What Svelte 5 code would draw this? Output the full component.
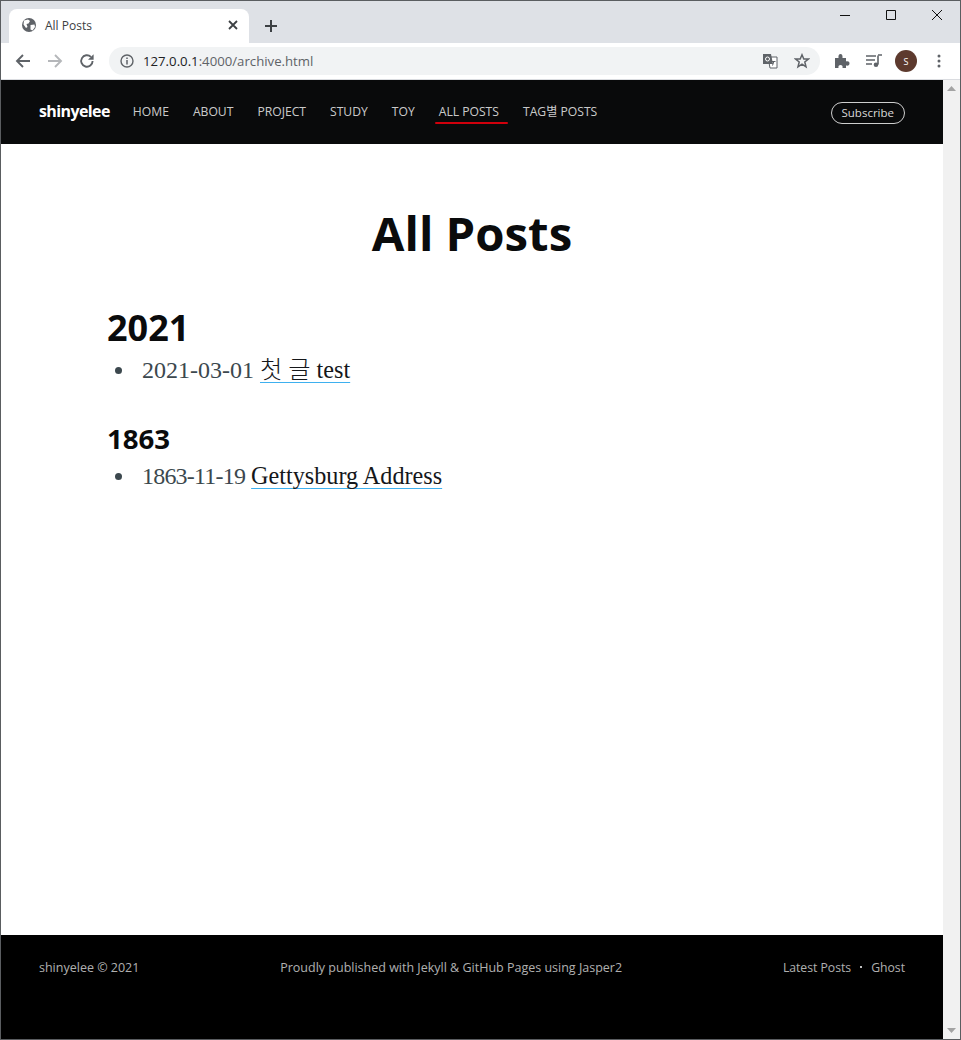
<script>
  const navItems = [
    { label: 'HOME' },
    { label: 'ABOUT' },
    { label: 'PROJECT' },
    { label: 'STUDY' },
    { label: 'TOY' },
    { label: 'ALL POSTS', active: true },
    { label: 'TAG별 POSTS' }
  ];
  const years = [
    { year: '2021', big: true, posts: [{ date: '2021-03-01', title: '첫 글 test' }] },
    { year: '1863', big: false, posts: [{ date: '1863-11-19', title: 'Gettysburg Address', narrow: true }] }
  ];
</script>

<div class="window">
  <div class="tabstrip">
    <div class="tab">
      <svg class="globe" viewBox="0 0 16 16" width="16" height="16"><circle cx="8" cy="8" r="7" fill="#5f6368"/><path d="M3 3.5 7 2.5 9 4 7.5 6.5 5.5 7 6.5 10 5 11 2.5 7.5ZM9.5 8 13.5 7.5 14 10 11.5 13.5 9.5 12.5Z" fill="#fff"/></svg>
      <span class="tabtitle">All Posts</span>
      <svg class="tabclose" viewBox="0 0 10 10" width="10" height="10"><path d="M1 1 9 9M9 1 1 9" stroke="#3c4043" stroke-width="1.8"/></svg>
    </div>
    <svg class="newtab" viewBox="0 0 12 12" width="12" height="12"><path d="M6 0V12M0 6H12" stroke="#3c4043" stroke-width="2"/></svg>
    <div class="winctl">
      <svg viewBox="0 0 10 10" width="10" height="10"><path d="M0 5.5H10" stroke="#111" stroke-width="1"/></svg>
      <svg viewBox="0 0 10 10" width="10" height="10"><path d="M.5.5H9.5V9.5H.5Z" fill="none" stroke="#111" stroke-width="1"/></svg>
      <svg viewBox="0 0 10 10" width="10" height="10"><path d="M0 0 10 10M10 0 0 10" stroke="#111" stroke-width="1"/></svg>
    </div>
  </div>

  <div class="toolbar">
    <svg class="tb" viewBox="0 0 16 16" width="16" height="16"><path d="M15 8H2M8 2 2 8l6 6" fill="none" stroke="#5f6368" stroke-width="1.9"/></svg>
    <svg class="tb dim" viewBox="0 0 16 16" width="16" height="16"><path d="M1 8H14M8 2l6 6-6 6" fill="none" stroke="#b5b7ba" stroke-width="1.9"/></svg>
    <svg class="tb" viewBox="0 0 16 16" width="16" height="16"><path d="M13.6 8A5.7 5.7 0 1 1 11.9 3.9" fill="none" stroke="#5f6368" stroke-width="1.9"/><path d="M14.6 1.2V6.8H9Z" fill="#5f6368"/></svg>
    <div class="omnibox">
      <svg viewBox="0 0 14 14" width="14" height="14"><circle cx="7" cy="7" r="6" fill="none" stroke="#5f6368" stroke-width="1.4"/><path d="M7 6V10.4M7 3.6V5" stroke="#5f6368" stroke-width="1.5"/></svg>
      <span class="url"><span class="host">127.0.0.1</span>:4000/archive.html</span>
      <svg class="translate" viewBox="0 0 16 16" width="16" height="16"><path d="M6 4H15V15H8Z" fill="#fff" stroke="#5f6368"/><path d="M1 1H9L11 11H1Z" fill="#5f6368"/><circle cx="5.5" cy="6" r="2" fill="none" stroke="#fff"/><path d="M10 8.5H13.5M12 8 10.5 12.5" stroke="#5f6368"/></svg>
      <svg class="star" viewBox="0 0 16 16" width="16" height="16"><path d="M8 1.8 9.8 6H14.4L10.8 9 12 13.8 8 11.2 4 13.8 5.2 9 1.6 6H6.2Z" fill="none" stroke="#5f6368" stroke-width="1.5"/></svg>
    </div>
    <svg class="ext" viewBox="0 0 16 16" width="16" height="16"><path d="M1 5H4.5C4.2 2.5 5 1 6.5 1S8.8 2.5 8.5 5H12V8.5C14.5 8 15.5 9 15.5 10.5S14.5 13 12 12.5V15H8.500C9 13 8 12 6.5 12S4 13 4.5 15H1Z" fill="#5f6368"/></svg>
    <svg class="media" viewBox="0 0 16 14" width="16" height="14"><path d="M0 2H10M0 6H9M0 10H6" stroke="#5f6368" stroke-width="1.3"/><path d="M12 1.5V10.5" stroke="#5f6368" stroke-width="1.6"/><path d="M12 1H16" stroke="#5f6368" stroke-width="1.5"/><circle cx="10" cy="10.8" r="2.3" fill="#5f6368"/></svg>
    <div class="avatar">S</div>
    <svg class="kebab" viewBox="0 0 4 14" width="4" height="14"><circle cx="2" cy="2" r="1.5" fill="#5f6368"/><circle cx="2" cy="7" r="1.5" fill="#5f6368"/><circle cx="2" cy="12" r="1.5" fill="#5f6368"/></svg>
  </div>

  <div class="viewport">
    <div class="page">
      <nav class="sitenav">
        <a class="logo" href="#top">shinyelee</a>
        <ul class="menu">
          {#each navItems as item}
            <li class:active={item.active}><a href="#top">{item.label}</a></li>
          {/each}
        </ul>
        <a class="subscribe" href="#top">Subscribe</a>
      </nav>

      <main class="content">
        <h1>All Posts</h1>
        <div class="archive">
          {#each years as y}
            <section class:big={y.big}>
              <h2>{y.year}</h2>
              <ul>
                {#each y.posts as p}
                  <li><span class="date" class:narrow={p.narrow}>{p.date}</span> <a href="#top">{p.title}</a></li>
                {/each}
              </ul>
            </section>
          {/each}
        </div>
      </main>

      <footer class="sitefoot">
        <span class="left">shinyelee © 2021</span>
        <span class="mid">Proudly published with Jekyll &amp; GitHub Pages using Jasper2</span>
        <span class="right"><a href="#top">Latest Posts</a><i class="dot"></i><a href="#top">Ghost</a></span>
      </footer>
    </div>

    <div class="scrollbar">
      <svg viewBox="0 0 9 5" width="9" height="5"><path d="M4.5 0 9 5H0Z" fill="#a3a3a3"/></svg>
      <svg viewBox="0 0 9 5" width="9" height="5"><path d="M4.5 5 9 0H0Z" fill="#a3a3a3"/></svg>
    </div>
  </div>
</div>

<style>
  :global(body) {
    margin: 0;
    background: #fff;
  }
  .window {
    width: 961px;
    height: 1040px;
    box-sizing: border-box;
    border: 1px solid #5a5d60;
    display: flex;
    flex-direction: column;
    overflow: hidden;
    font-family: "Open Sans", "Noto Sans CJK KR", sans-serif;
  }
  .tabstrip {
    height: 42px;
    flex: none;
    background: #dee1e6;
    display: flex;
    align-items: flex-end;
    padding-left: 8px;
  }
  .tab {
    width: 240px;
    height: 34px;
    background: #fff;
    border-radius: 8px 8px 0 0;
    display: flex;
    align-items: center;
    padding: 0 11px 2px 12px;
    box-sizing: border-box;
  }
  .globe { margin-right: 8px; }
  .tabtitle {
    flex: 1;
    font-size: 12px;
    color: #3c4043;
  }
  .newtab {
    margin: 0 0 11px 16px;
  }
  .winctl {
    margin-left: auto;
    align-self: flex-start;
    display: flex;
    gap: 36px;
    padding: 9px 18px 0 0;
  }
  .toolbar {
    height: 37px;
    flex: none;
    background: #fff;
    border-bottom: 1px solid #dadce0;
    box-sizing: border-box;
    display: flex;
    align-items: center;
    padding-left: 14px;
  }
  .tb { margin-right: 16px; }
  .omnibox {
    width: 711px;
    height: 28px;
    margin-left: -2px;
    background: #f1f3f4;
    border-radius: 14px;
    display: flex;
    align-items: center;
    padding: 0 10px 0 11px;
    box-sizing: border-box;
  }
  .url {
    flex: 1;
    margin-left: 9px;
    font-size: 13.2px;
    color: #5f6368;
  }
  .host { color: #202124; }
  .star { margin-left: 16px; }
  .ext { margin-left: 14px; }
  .media { margin-left: 16px; }
  .avatar {
    width: 22px;
    height: 22px;
    margin-left: 13px;
    border-radius: 50%;
    background: #5d3a2e;
    color: #fff;
    font-size: 9px;
    display: flex;
    align-items: center;
    justify-content: center;
  }
  .kebab { margin-left: 20px; }
  .viewport {
    flex: 1;
    display: flex;
    min-height: 0;
  }
  .page {
    flex: 1;
    display: flex;
    flex-direction: column;
    min-width: 0;
  }
  .scrollbar {
    width: 17px;
    flex: none;
    background: #f1f1f1;
    display: flex;
    flex-direction: column;
    justify-content: space-between;
    align-items: center;
    padding: 6px 0;
    box-sizing: border-box;
  }
  a {
    color: inherit;
    text-decoration: none;
  }
  .sitenav {
    height: 64px;
    flex: none;
    background: #090a0b;
    display: flex;
    align-items: center;
    padding: 0 38px 2px;
    box-sizing: border-box;
  }
  .logo {
    color: #fff;
    font-size: 16px;
    font-weight: 700;
    letter-spacing: -0.6px;
    margin-right: 11px;
  }
  .menu {
    list-style: none;
    margin: 0;
    padding: 0;
    display: flex;
    flex: 1;
  }
  .menu li {
    padding: 0 12px;
    font-size: 12.15px;
    line-height: 19px;
    color: rgba(255, 255, 255, 0.8);
    position: relative;
  }
  .menu li a { display: block; }
  .menu li.active::after {
    content: "";
    position: absolute;
    left: 8px;
    right: 3px;
    bottom: -3px;
    height: 2px;
    background: #d0000c;
    border-radius: 1px;
  }
  .subscribe {
    border: 1px solid rgba(255, 255, 255, 0.8);
    border-radius: 11px;
    color: rgba(255, 255, 255, 0.85);
    font-size: 11.5px;
    line-height: 20px;
    padding: 0 10px;
    margin-top: 4px;
  }
  .content {
    flex: 1;
    background: #fff;
    padding: 0 106px;
  }
  h1 {
    margin: 56px 0 0;
    text-align: center;
    font-size: 47.3px;
    line-height: 66px;
    font-weight: 700;
    color: #0a0b0c;
  }
  .archive { margin-top: 37px; }
  section { margin-top: 31px; }
  section.big { margin-top: 0; }
  h2 {
    margin: 0;
    font-size: 27.6px;
    line-height: 39px;
    font-weight: 700;
    color: #0a0b0c;
  }
  section.big h2 {
    font-size: 36px;
    line-height: 49px;
  }
  section ul {
    list-style: none;
    margin: 0;
    padding: 0 0 0 35px;
    font-family: "Liberation Serif", "Noto Sans CJK KR", serif;
    font-size: 24px;
    font-weight: 300;
    line-height: 36px;
    color: #3c484e;
  }
  section li {
    position: relative;
  }
  section li::before {
    content: "";
    position: absolute;
    left: -27px;
    top: 15px;
    width: 7px;
    height: 7px;
    border-radius: 50%;
    background: #3c484e;
  }
  .date.narrow { letter-spacing: -0.8px; }
  section li a {
    color: #15171a;
    font-size: 24.2px;
    text-decoration: underline;
    text-decoration-color: #3eb0ef;
    text-decoration-thickness: 1px;
    text-underline-offset: 4px;
    text-decoration-skip-ink: none;
  }
  .sitefoot {
    height: 104px;
    flex: none;
    background: #000;
    color: rgba(255, 255, 255, 0.7);
    font-size: 12.5px;
    display: flex;
    justify-content: space-between;
    padding: 24px 38px 0;
    box-sizing: border-box;
  }
  .mid { margin-right: 20px; }
  .right {
    display: flex;
    align-items: flex-start;
    font-size: 12.2px;
  }
  .dot {
    width: 2px;
    height: 2px;
    margin: 7px 9px 0;
    border-radius: 50%;
    background: #fff;
  }
</style>
